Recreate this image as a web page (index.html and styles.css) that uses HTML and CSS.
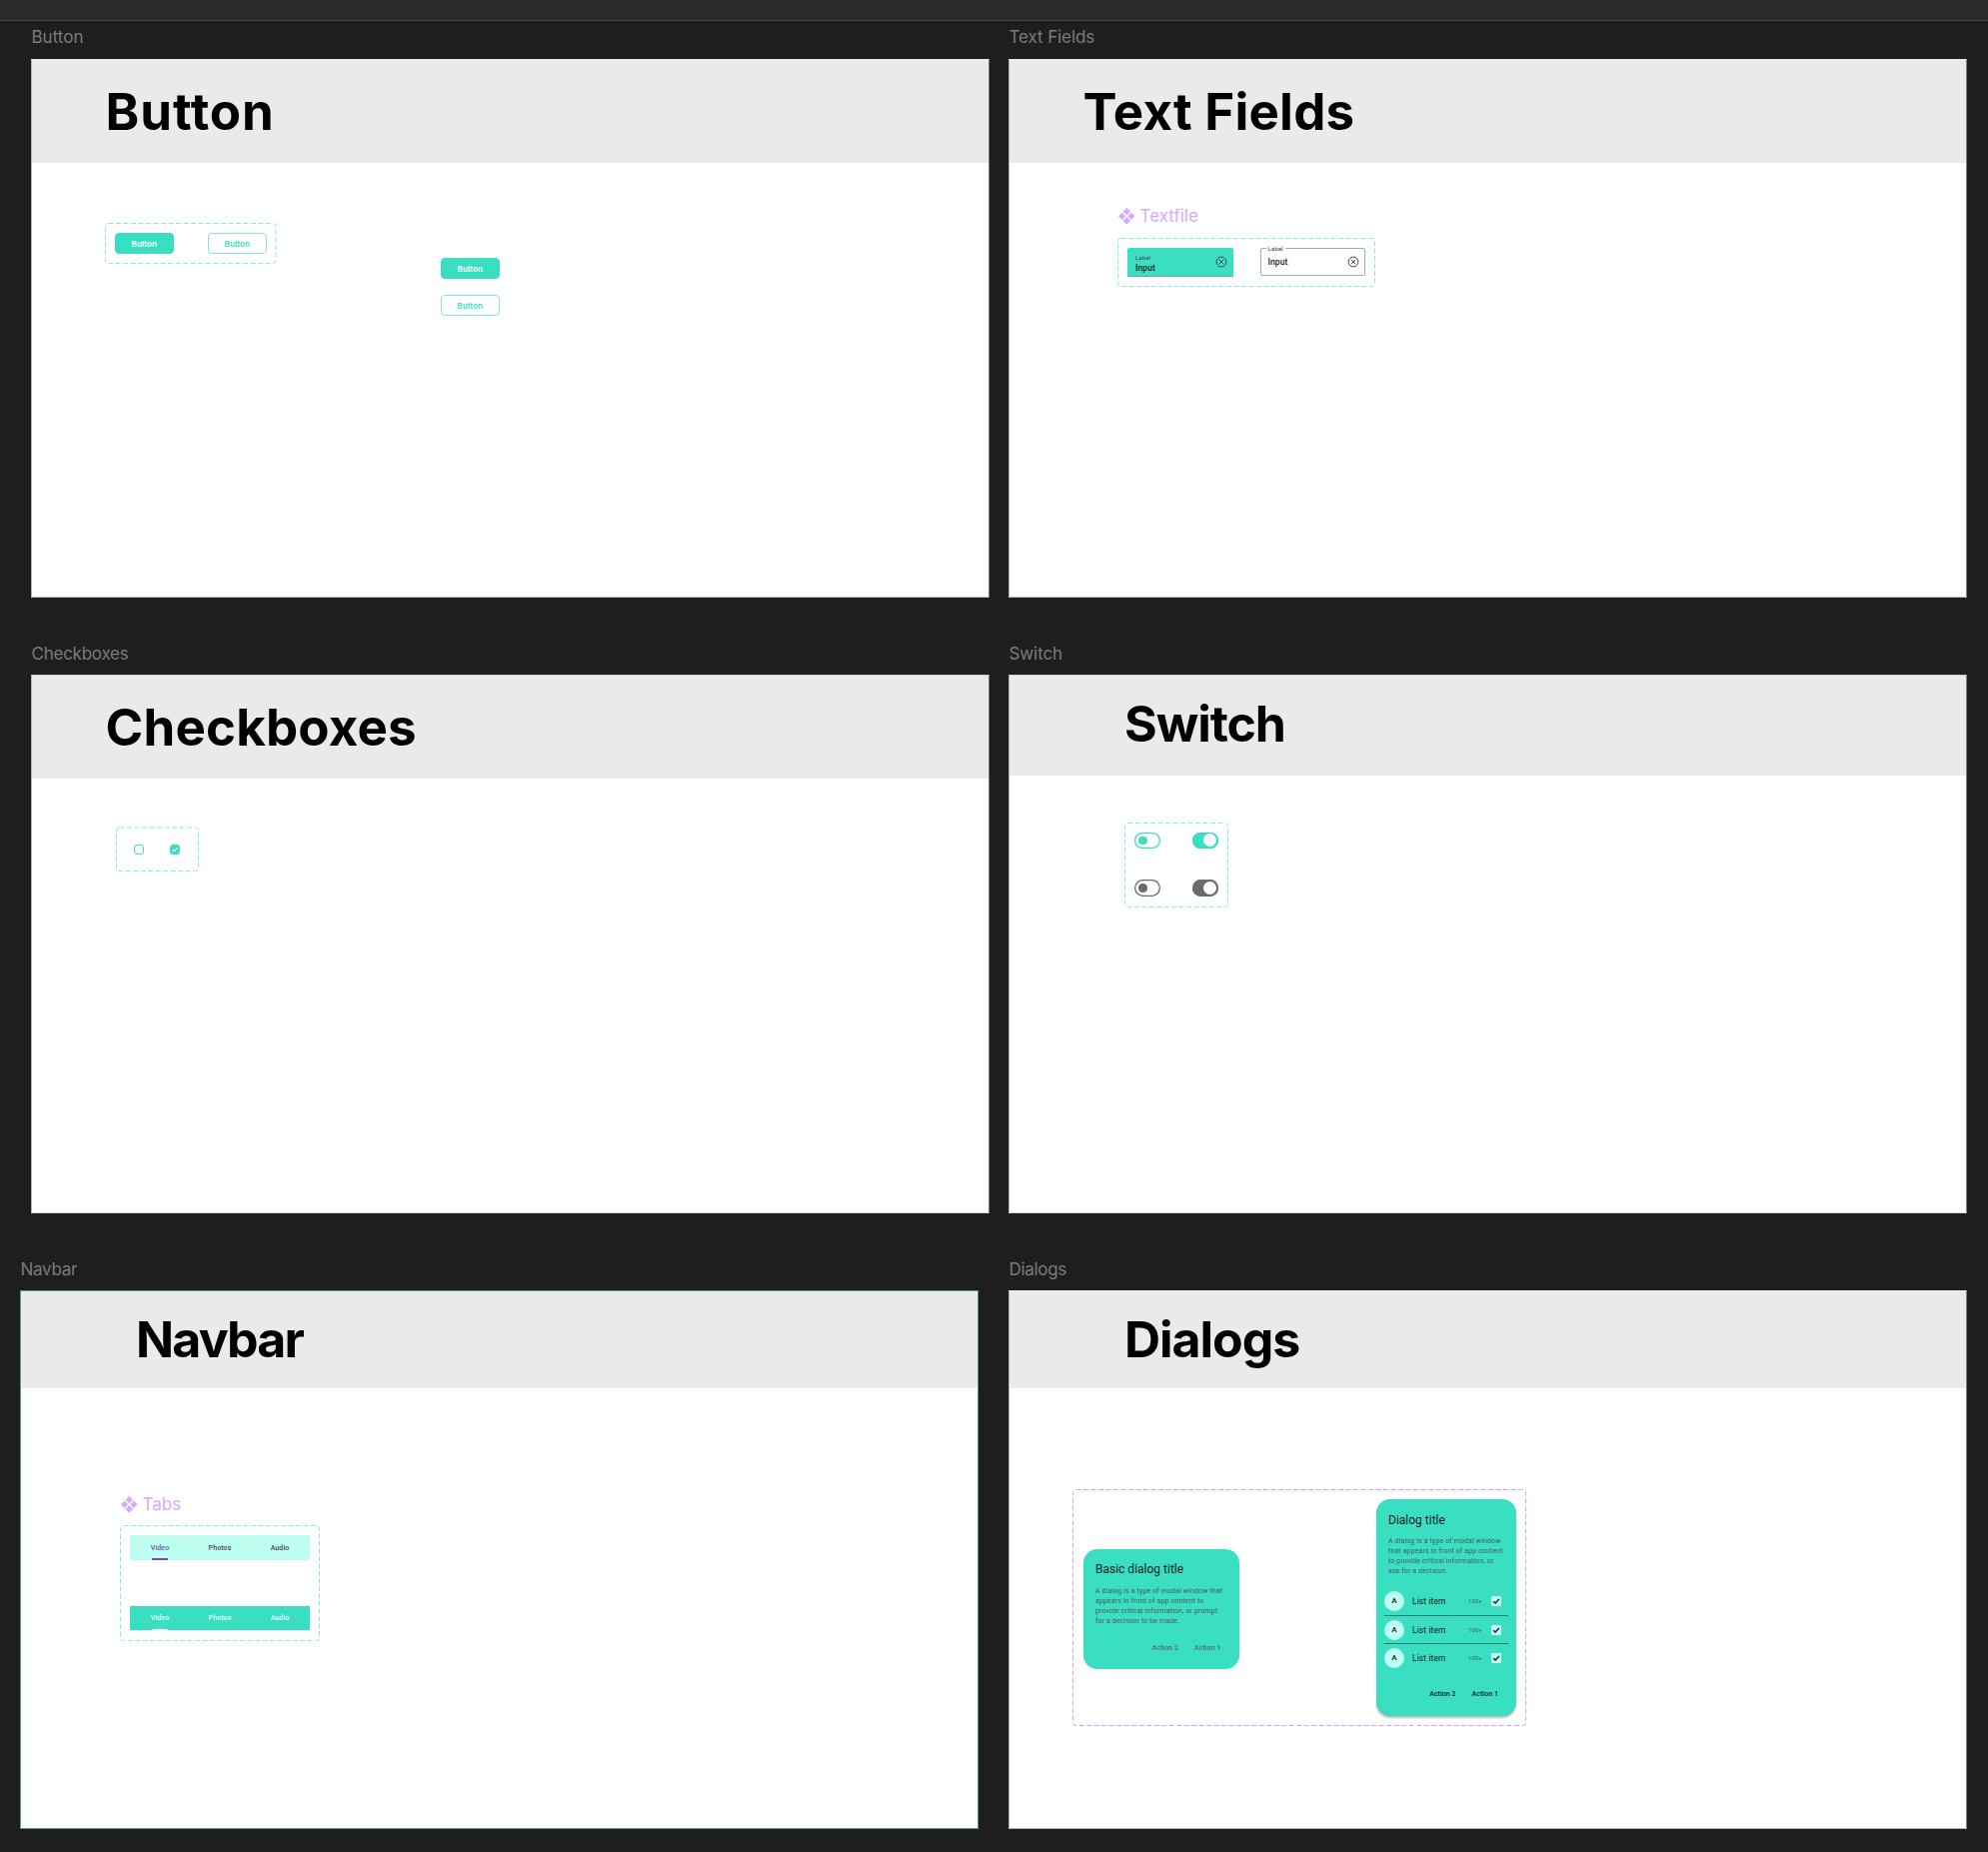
FILE: index.html
```html
<!DOCTYPE html>
<html lang="en">
<head>
<meta charset="utf-8">
<title>Components</title>
<link rel="stylesheet" href="styles.css">
</head>
<body>
<svg width="0" height="0" class="defs">
  <symbol id="component" viewBox="0 0 16 16"><path d="M8 .6l2.900 2.900L8 6.400 5.100 3.500zM8 9.600l2.900 2.900L8 15.400l-2.900-2.900zM3.500 5.100L6.400 8l-2.900 2.900L.6 8zM12.500 5.100L15.400 8l-2.900 2.900L9.600 8z"/></symbol>
  <symbol id="cancel" viewBox="0 0 12 12"><circle cx="6" cy="6" r="4.900"/><path d="M3.900 3.900l4.200 4.200M8.100 3.900L3.900 8.100"/></symbol>
  <symbol id="check" viewBox="0 0 10 10"><path d="M2.200 5.200l1.900 1.900 3.800-4"/></symbol>
</svg>
<div class="topbar"></div>
<main class="canvas">
  <section class="artboard">
    <div class="name n-button">Button</div>
    <div class="frame">
      <header class="head"><h1 class="t-button">Button</h1></header>
      <div class="node set button-set">
        <svg class="dash"><rect x=".5" y=".5" width="170.500" height="40" rx="3"/></svg>
        <span class="btn filled">Button</span><span class="btn outline">Button</span>
      </div>
      <div class="node button-pair"><span class="btn filled">Button</span><span class="btn outline">Button</span></div>
    </div>
  </section>

  <section class="artboard">
    <div class="name n-text">Text Fields</div>
    <div class="frame">
      <header class="head"><h1 class="t-text">Text Fields</h1></header>
      <div class="node component-name textfile"><svg><use href="#component"/></svg><span>Textfile</span></div>
      <div class="node set field-set">
        <svg class="dash"><rect x=".5" y=".5" width="257" height="48" rx="3"/></svg>
        <div class="field solid"><div><small>Label</small><b>Input</b></div><svg><use href="#cancel"/></svg></div>
        <div class="field lined"><small>Label</small><b>Input</b><svg><use href="#cancel"/></svg></div>
      </div>
    </div>
  </section>

  <section class="artboard lower">
    <div class="name n-check">Checkboxes</div>
    <div class="frame light">
      <header class="head"><h1 class="t-check">Checkboxes</h1></header>
      <div class="node set check-set">
        <svg class="dash"><rect x=".5" y=".9" width="82" height="43.600" rx="3"/></svg>
        <span class="box"></span><span class="box on"><svg><use href="#check"/></svg></span>
      </div>
    </div>
  </section>

  <section class="artboard lower">
    <div class="name n-switch">Switch</div>
    <div class="frame light">
      <header class="head h-switch"><h1 class="t-switch">Switch</h1></header>
      <div class="node set switch-set">
        <svg class="dash"><rect x=".5" y=".5" width="103" height="84" rx="3"/></svg>
        <span class="switch"></span><span class="switch on"></span>
        <span class="switch gray"></span><span class="switch on gray"></span>
      </div>
    </div>
  </section>

  <section class="artboard lower shifted">
    <div class="name n-nav">Navbar</div>
    <div class="frame selected">
      <header class="head h-nav"><h1 class="t-nav">Navbar</h1></header>
      <div class="node component-name tabs-name"><svg><use href="#component"/></svg><span>Tabs</span></div>
      <div class="node set tab-set">
        <svg class="dash"><rect x=".5" y=".5" width="199" height="115" rx="3"/></svg>
        <nav class="tabs pale"><span class="active">Video</span><span>Photos</span><span>Audio</span></nav>
        <nav class="tabs strong"><span class="active">Video</span><span>Photos</span><span>Audio</span></nav>
      </div>
    </div>
  </section>

  <section class="artboard lower">
    <div class="name n-dialog">Dialogs</div>
    <div class="frame">
      <header class="head h-dialog"><h1 class="t-dialog">Dialogs</h1></header>
      <div class="node set dialog-set">
        <svg class="dash purple"><rect x=".5" y=".5" width="453" height="236" rx="3"/></svg>
        <article class="dialog basic">
          <h2>Basic dialog title</h2>
          <p>A dialog is a type of modal window that<br>appears in front of app content to<br>provide critical information, or prompt<br>for a decision to be made.</p>
          <footer><span>Action 2</span><span>Action 1</span></footer>
        </article>
        <article class="dialog listed">
          <h2>Dialog title</h2>
          <p>A dialog is a type of modal window<br>that appears in front of app content<br>to provide critical information, or<br>ask for a decision.</p>
          <ul>
            <li><i>A</i><span>List item</span><small>100+</small><em><svg><use href="#check"/></svg></em></li>
            <li><i>A</i><span>List item</span><small>100+</small><em><svg><use href="#check"/></svg></em></li>
            <li><i>A</i><span>List item</span><small>100+</small><em><svg><use href="#check"/></svg></em></li>
          </ul>
          <footer><span>Action 2</span><span>Action 1</span></footer>
        </article>
      </div>
    </div>
  </section>
</main>
</body>
</html>
```
FILE: styles.css
```css
* { box-sizing: border-box; }
body { margin: 0; height: 1853px; overflow: hidden; background: #1e1e1e; font-family: Inter, "Liberation Sans", sans-serif; }
.defs { position: absolute; }
svg { display: block; }
.topbar { height: 21px; background: #2c2c2c; border-bottom: 1px solid #444; }
.canvas { display: grid; grid-template-columns: 959px 959px; column-gap: 19px; row-gap: 39px; padding-left: 31px; }
.artboard { min-width: 0; }
.shifted { margin-left: -11px; margin-right: 11px; }
.name { height: 38px; padding: 4px 0 0 .5px; font-size: 17px; line-height: 24px; color: #7b7b7b; white-space: nowrap; }
.lower .name { padding-top: 5px; }
.n-text, .n-switch { letter-spacing: -.1px; }
.n-check, .n-nav { letter-spacing: -.25px; }
.n-dialog { letter-spacing: -.32px; }
.frame { position: relative; height: 539px; background: #fff; border: 1px solid #b4b4b4; border-top-color: #e9e9e9; border-right-color: #7e7e7e; }
.frame.light { border-bottom-color: #d8d8d8; border-top-color: #cfcfcf; }
.frame.selected { border-color: #46a692; }

.head { height: 103px; padding: 21.5px 0 0 73.500px; background: #eaeaea; }
.h-switch { height: 100px; padding: 17.5px 0 0 115px; }
.h-nav { height: 96.500px; padding: 18px 0 0 115px; }
.h-dialog { height: 97px; padding: 18px 0 0 115px; }
h1 { margin: 0; font-size: 51px; line-height: 60px; font-weight: 700; color: #000; white-space: nowrap; }
.t-button { letter-spacing: .95px; }
.t-text { letter-spacing: .25px; }
.t-check { letter-spacing: .2px; }
.t-switch, .t-dialog { font-size: 50px; letter-spacing: -1.05px; }
.t-nav { font-size: 50px; letter-spacing: -1.8px; }

/* Nodes placed freely inside a frame */
.node { position: absolute; }
.dash { position: absolute; inset: 0; width: 100%; height: 100%; overflow: visible; fill: none; stroke: #8fe9d8; stroke-dasharray: 5 2.500; }
.dash.purple { stroke: #cba4fa; }
.component-name { display: flex; align-items: center; gap: 5px; font-size: 17px; line-height: 20px; color: #d4aaff; }
.component-name svg { width: 16.500px; height: 16.500px; fill: #d4aaff; stroke: #d4aaff; stroke-width: 1; stroke-linejoin: round; }
.textfile { left: 109px; top: 146px; }
.tabs-name { left: 100px; top: 203px; }

.button-set { left: 73px; top: 163px; width: 171.500px; height: 41px; padding: 10px 10px; display: flex; justify-content: space-between; }
.button-pair { left: 409px; top: 198px; display: grid; gap: 16px; }
.btn { width: 58.500px; height: 21px; border: 1px solid #3adec1; border-radius: 4px; font-size: 8px; line-height: 20px; font-weight: 600; text-align: center; }
.filled { background: #3adec1; color: #fff; }
.outline { border-color: #7fe8d6; color: #3adec1; }

.field-set { left: 108px; top: 178px; width: 258px; height: 49px; padding: 10px; display: flex; justify-content: space-between; }
.field { width: 105.500px; height: 29px; display: flex; align-items: center; justify-content: space-between; padding: 0 6px 0 8px; font-family: Roboto, sans-serif; color: #1d1b20; }
.field svg { width: 12px; height: 12px; fill: none; stroke: #49454f; }
.field small { display: block; font-size: 6px; line-height: 8px; letter-spacing: .2px; color: #49454f; }
.field b { display: block; font-size: 8.500px; line-height: 12px; font-weight: 500; letter-spacing: .1px; }
.solid { background: #3adec1; border-bottom: 1px solid #79a79f; border-radius: 2px 2px 0 0; }
.solid > div { padding-top: 3px; }
.lined { position: relative; height: 28px; border: 1px solid #aaa8ac; border-radius: 2px; padding: 0 5.500px 0 7px; }
.lined small { position: absolute; left: 5px; top: -4px; padding: 0 2px; background: #fef7ff; }

.check-set { left: 84px; top: 151px; width: 83px; height: 45px; padding: 0 19px 0 17.500px; display: flex; align-items: center; justify-content: space-between; }
.box { width: 10px; height: 10px; border: 1px solid #3adec1; border-radius: 3px; }
.box.on { background: #3adec1; }
.box svg { width: 8px; height: 8px; }
.box svg, em svg { fill: none; stroke: #fff; stroke-width: 1.400; }

.switch-set { left: 115px; top: 147px; width: 104px; height: 85px; padding: 9.500px 10.500px 11.500px 10px; display: grid; grid-template-columns: 26px 26px; justify-content: space-between; align-content: space-between; }
.switch { width: 26px; height: 16.500px; padding: 0 4px; box-shadow: inset 0 0 0 1.300px #3adec1; border-radius: 9px; display: flex; align-items: center; color: #3adec1; }
.switch::before { content: ""; width: 8.500px; height: 8.500px; border-radius: 50%; background: currentColor; }
.switch.on { background: #3adec1; justify-content: flex-end; padding: 0 1.500px; }
.switch.on::before { width: 13px; height: 13px; background: #fff; }
.switch.gray { box-shadow: inset 0 0 0 1.300px #6b6b6b; color: #6b6b6b; }
.switch.on.gray { background: #6b6b6b; }

.tab-set { left: 99px; top: 234px; width: 200px; height: 116px; padding: 10px 10px 11px; display: flex; flex-direction: column; justify-content: space-between; }
.tabs { display: grid; grid-template-columns: repeat(3, 1fr); height: 25px; font: 500 7px/26px Roboto, sans-serif; letter-spacing: .1px; text-align: center; color: #49454f; }
.pale { background: #bffff2; }
.strong { height: 24px; background: #3adec1; color: #e9fffa; line-height: 25px; }
.active { display: flex; flex-direction: column; align-items: center; height: 25px; }
.active::after { content: ""; width: 16px; height: 1.500px; margin-top: -3px; border-radius: 1px 1px 0 0; background: currentColor; }
.pale .active { color: #66549a; }
.strong .active::after { margin-top: -2.500px; background: #fff; }

.dialog-set { left: 63px; top: 198px; width: 454px; height: 237px; padding: 10px; display: flex; justify-content: space-between; align-items: flex-start; font-family: Roboto, sans-serif; }
.dialog { background: #3adec1; border-radius: 14px; color: #1d1b20; display: flex; flex-direction: column; }
.dialog h2 { margin: 0; font-size: 12px; line-height: 16px; font-weight: 400; }
.dialog p { margin: 0; font-size: 7px; line-height: 10px; letter-spacing: .13px; color: #49605f; white-space: nowrap; }
.dialog footer { display: flex; justify-content: flex-end; gap: 16px; font-size: 7px; line-height: 10px; font-weight: 500; letter-spacing: .05px; }
.basic { width: 156px; height: 120px; margin: 50px 0 0 .5px; padding: 12px 18px 0 12.500px; }
.basic p { margin-top: 8.500px; }
.basic footer { margin-top: 17px; color: #5e6291; }
.listed { width: 140px; height: 217px; padding: 12.500px 8px 0; box-shadow: 0 2px 2px #0004; }
.listed h2, .listed p { padding-left: 4px; }
.listed p { margin-top: 8.500px; }
.listed footer { margin-top: 16.500px; padding-right: 10px; color: #0b201d; }
.dialog ul { list-style: none; margin: 11.400px 0 0; padding: 0; }
.dialog li { height: 28.500px; display: grid; grid-template-columns: 28px 56px 23px 10px; align-items: center; border-bottom: 1px solid #247e70; }
.dialog li:last-child { border-color: transparent; }
.dialog li i { width: 20px; height: 20px; border-radius: 50%; background: #bffff2; font: 500 8px/20px Roboto, sans-serif; text-align: center; color: #0b201d; }
.dialog li span { font-size: 8.500px; letter-spacing: .1px; }
.dialog li small { font-size: 5.800px; letter-spacing: .2px; color: #49605f; }
.dialog li em { width: 10px; height: 10px; background: #bffff2; border-radius: 1px; }
.dialog em svg { width: 10px; height: 10px; stroke: #0b201d; }
```
